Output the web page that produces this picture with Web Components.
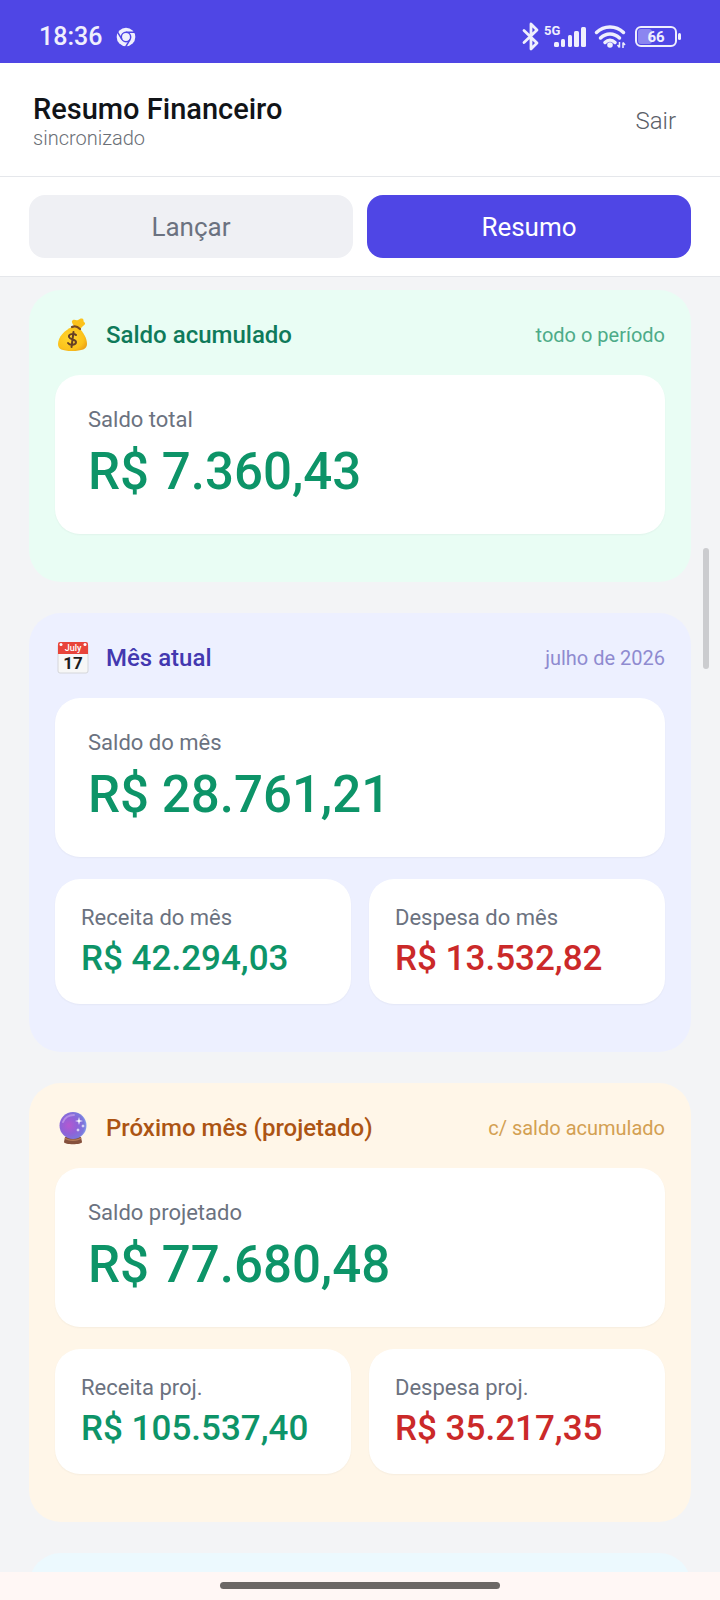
<!DOCTYPE html>
<html lang="pt-BR">
<head>
<meta charset="utf-8">
<meta name="viewport" content="width=device-width, initial-scale=1">
<title>Resumo Financeiro</title>
<style>
  html, body {
    margin: 0;
    height: 100%;
  }
  body {
    font-family: Roboto, "Liberation Sans", sans-serif;
    color: #111418;
    background: #f3f4f6;
  }
</style>
</head>
<body>
<finance-app>
  <status-bar slot="top" time="18:36" battery="66"></status-bar>
  <app-header slot="top" heading="Resumo Financeiro" status="sincronizado"></app-header>
  <view-tabs slot="top"></view-tabs>

  <summary-section tone="green" heading="Saldo acumulado" note="todo o período">
    <emoji-icon slot="icon" name="money"></emoji-icon>
    <amount-card size="large" label="Saldo total" value="R$ 7.360,43"></amount-card>
  </summary-section>

  <summary-section tone="indigo" heading="Mês atual" note="julho de 2026">
    <emoji-icon slot="icon" name="calendar"></emoji-icon>
    <amount-card size="large" label="Saldo do mês" value="R$ 28.761,21"></amount-card>
    <amount-card label="Receita do mês" value="R$ 42.294,03"></amount-card>
    <amount-card label="Despesa do mês" value="R$ 13.532,82" kind="expense"></amount-card>
  </summary-section>

  <summary-section tone="amber" heading="Próximo mês (projetado)" note="c/ saldo acumulado">
    <emoji-icon slot="icon" name="crystal"></emoji-icon>
    <amount-card size="large" label="Saldo projetado" value="R$ 77.680,48"></amount-card>
    <amount-card label="Receita proj." value="R$ 105.537,40"></amount-card>
    <amount-card label="Despesa proj." value="R$ 35.217,35" kind="expense"></amount-card>
  </summary-section>

  <summary-section tone="cyan"></summary-section>

  <gesture-bar slot="bottom"></gesture-bar>
</finance-app>

<script>
  function attach(el, html) {
    const root = el.attachShadow({ mode: 'open' });
    root.innerHTML = html;
    return root;
  }

  class FinanceApp extends HTMLElement {
    constructor() {
      super();
      attach(this, `
        <style>
          :host {
            display: flex;
            flex-direction: column;
            height: 100vh;
          }
          .view {
            position: relative;
            flex: 1;
            min-height: 0;
          }
          main {
            box-sizing: border-box;
            height: 100%;
            overflow-y: auto;
            scrollbar-width: none;
            padding: 13px 29px 0;
            display: flex;
            flex-direction: column;
            gap: 31px;
          }
          .thumb {
            position: absolute;
            right: 11px;
            top: 271px;
            width: 6px;
            height: 121px;
            border-radius: 3px;
            background: #cbcccf;
          }
        </style>
        <slot name="top"></slot>
        <div class="view">
          <main><slot></slot></main>
          <div class="thumb"></div>
        </div>
        <slot name="bottom"></slot>
      `);
    }
  }

  class StatusBar extends HTMLElement {
    connectedCallback() {
      attach(this, `
        <style>
          :host {
            box-sizing: border-box;
            display: flex;
            align-items: center;
            justify-content: space-between;
            height: 63px;
            padding: 10px 38px 0 39px;
            background: #4f46e5;
            color: #efeffd;
          }
          .group {
            display: flex;
            align-items: center;
          }
          .time {
            font-size: 25px;
            font-weight: 500;
            line-height: 28px;
          }
          svg { display: block; }
          .chrome { margin-left: 14px; }
          text {
            font-family: Roboto, "Liberation Sans", sans-serif;
            font-weight: 700;
          }
        </style>
        <div class="group">
          <span class="time">${this.getAttribute('time')}</span>
          <svg class="chrome" width="20" height="20" viewBox="0 0 20 20">
            <circle cx="10" cy="10" r="9.3" fill="#efeffd"/>
            <g fill="none" stroke="#4f46e5" stroke-width="1.5">
              <circle cx="10" cy="10" r="4.7"/>
              <path d="M10 5.3H19M5.900 12.400L1.400 4.800M14.100 12.400L9.600 20"/>
            </g>
          </svg>
        </div>
        <div class="group">
          <svg width="160" height="30" viewBox="0 0 160 30">
            <path d="M2 8.500l13 12.500-6 6V2l6 6L2 20.500" fill="none" stroke="#efeffd" stroke-width="2.800" stroke-linejoin="round" stroke-linecap="round"/>
            <text x="22" y="13" font-size="13" fill="#efeffd">5G</text>
            <g fill="#efeffd">
              <rect x="32" y="20" width="5" height="5" rx="1.500"/>
              <rect x="39" y="17" width="4" height="8" rx="1.500"/>
              <rect x="46" y="13" width="4" height="12" rx="1.500"/>
              <rect x="52" y="9" width="5" height="16" rx="1.500"/>
              <rect x="59" y="5" width="5" height="20" rx="1.500"/>
            </g>
            <g fill="none" stroke="#efeffd" stroke-width="3.500" stroke-linecap="round">
              <path d="M74.500 10.500C82 3 94 3 101.500 10.500"/>
              <path d="M78.500 16C84 10.500 92 10.500 97.500 16"/>
              <path d="M83 20.500C86 17.500 90 17.500 93 20.500"/>
            </g>
            <circle cx="88" cy="23" r="2.800" fill="#efeffd"/>
            <path d="M97.500 20v5.500M95.500 23l2 2.500M101 26v-5.500M103 23l-2-2.500" fill="none" stroke="#efeffd" stroke-width="1.500"/>
            <rect x="116" y="7" width="14" height="15" rx="3" fill="#8b85f0"/>
            <rect x="114" y="5" width="40" height="19" rx="5" fill="none" stroke="#efeffd" stroke-width="2"/>
            <rect x="156" y="11" width="3" height="7" rx="1.500" fill="#efeffd"/>
            <text x="134" y="20" font-size="15" text-anchor="middle" fill="#efeffd">${this.getAttribute('battery')}</text>
          </svg>
        </div>
      `);
    }
  }

  class AppHeader extends HTMLElement {
    connectedCallback() {
      attach(this, `
        <style>
          :host {
            display: flex;
            align-items: center;
            justify-content: space-between;
            padding: 29px 33px 26px;
            background: #fff;
            border-bottom: 1px solid #e5e7eb;
          }
          h1 {
            margin: 0;
            font-size: 29px;
            font-weight: 500;
            line-height: 34px;
          }
          p {
            margin: 0;
            font-size: 20px;
            font-weight: 300;
            line-height: 24px;
            color: #6b6f76;
          }
          button {
            border: 0;
            padding: 0 11px;
            background: none;
            font: 300 24px/30px Roboto, "Liberation Sans", sans-serif;
            color: #5b6068;
          }
        </style>
        <div>
          <h1>${this.getAttribute('heading')}</h1>
          <p>${this.getAttribute('status')}</p>
        </div>
        <button type="button">Sair</button>
      `);
    }
  }

  class ViewTabs extends HTMLElement {
    connectedCallback() {
      attach(this, `
        <style>
          :host {
            display: grid;
            grid-template-columns: 1fr 1fr;
            gap: 14px;
            padding: 18px 29px;
            background: #fff;
            border-bottom: 1px solid #e5e7eb;
          }
          button {
            height: 63px;
            border: 0;
            border-radius: 16px;
            padding: 0;
            background: #eff0f4;
            color: #6b7280;
            font: 400 26px/30px Roboto, "Liberation Sans", sans-serif;
          }
          button.active {
            background: #4f46e5;
            color: #fff;
          }
        </style>
        <button type="button">Lançar</button>
        <button type="button" class="active" aria-current="page">Resumo</button>
      `);
    }
  }

  class SummarySection extends HTMLElement {
    connectedCallback() {
      const heading = this.getAttribute('heading');
      attach(this, `
        <style>
          :host {
            --bg: #e9fdf4;
            --title: #0f7a5a;
            --note: #4dab88;
            flex: none;
            display: block;
            box-sizing: border-box;
            min-height: 120px;
            padding: 26px 26px 48px;
            border-radius: 32px;
            background: var(--bg);
          }
          :host([tone="indigo"]) { --bg: #edf0ff; --title: #4338b0; --note: #8f8bd0; }
          :host([tone="amber"]) { --bg: #fff6e8; --title: #ac5413; --note: #d3a052; }
          :host([tone="cyan"]) { --bg: #ecf9fe; }
          header {
            display: flex;
            align-items: center;
            height: 38px;
            padding-left: 1px;
            margin-bottom: 21px;
          }
          h2 {
            flex: 1;
            margin: 0 0 0 16px;
            font-size: 24px;
            font-weight: 500;
            line-height: 28px;
            color: var(--title);
          }
          .note {
            font-size: 20px;
            line-height: 24px;
            color: var(--note);
          }
          .cards {
            display: grid;
            grid-template-columns: 1fr 1fr;
            column-gap: 18px;
            row-gap: 22px;
          }
        </style>
        ${heading ? `
        <header>
          <slot name="icon"></slot>
          <h2>${heading}</h2>
          <span class="note">${this.getAttribute('note')}</span>
        </header>` : ''}
        <div class="cards"><slot></slot></div>
      `);
    }
  }

  class AmountCard extends HTMLElement {
    connectedCallback() {
      attach(this, `
        <style>
          :host {
            display: block;
            padding: 26px 26px 21px;
            border-radius: 25px;
            background: #fff;
            box-shadow: 0 1px 2px rgba(0, 0, 0, 0.04);
          }
          :host([size="large"]) {
            grid-column: 1 / -1;
            padding: 32px 33px 27px;
          }
          .label {
            margin-bottom: 4px;
            font-size: 22px;
            line-height: 26px;
            color: #6b7280;
          }
          .value {
            font-size: 35px;
            font-weight: 500;
            line-height: 48px;
            color: #0d9468;
          }
          :host([size="large"]) .value {
            font-size: 51px;
            line-height: 70px;
          }
          :host([kind="expense"]) .value { color: #cb2929; }
        </style>
        <div class="label">${this.getAttribute('label')}</div>
        <div class="value">${this.getAttribute('value')}</div>
      `);
    }
  }

  const EMOJI = {
    money: `
      <defs>
        <radialGradient id="bag" cx=".4" cy=".45" r=".65">
          <stop offset="0" stop-color="#ffd52e"/>
          <stop offset=".75" stop-color="#fcc21b"/>
          <stop offset="1" stop-color="#eda51a"/>
        </radialGradient>
      </defs>
      <path d="M18 8C16 5 15 3 17 2c2-1 3 1 5 0s3-2 5-1c1 1 0 2 1 3 2 1 1 3-1 4l-3 3z" fill="#fcc21b"/>
      <path d="M16 9C9 12 2 19 2 26c0 5 4 7 14 7s15-2 15-7c0-6-4-12-8-16z" fill="url(#bag)"/>
      <path d="M16 9c2-1 5-1 8 2" fill="none" stroke="#7a4a1e" stroke-width="2.200" stroke-linecap="round"/>
      <path d="M20 17c-2-2-8-1-7 2s7 2 7 5-6 4-8 1M17.500 14l-2 15" fill="none" stroke="#674025" stroke-width="2" stroke-linecap="round"/>`,
    calendar: `
      <rect x="2" y="3" width="30" height="29" rx="2" fill="#f7f7f7" stroke="#d5d6da"/>
      <path d="M2 3a2 2 0 0 1 2-2h26a2 2 0 0 1 2 2v10H2z" fill="#e8443a"/>
      <circle cx="5" cy="3.500" r="1.500" fill="#fff"/>
      <circle cx="29" cy="3.500" r="1.500" fill="#fff"/>
      <text x="17" y="10" font-size="9" font-weight="500" text-anchor="middle" fill="#fff">July</text>
      <text x="17" y="28" font-size="17" font-weight="700" text-anchor="middle" fill="#1c1c1c">17</text>`,
    crystal: `
      <defs>
        <radialGradient id="ball" cx=".35" cy=".5" r=".7">
          <stop offset="0" stop-color="#b558d0"/>
          <stop offset=".45" stop-color="#8f62d8"/>
          <stop offset=".8" stop-color="#7b78dc"/>
          <stop offset="1" stop-color="#8fb4f4"/>
        </radialGradient>
      </defs>
      <path d="M9 26h16l1 5c0 3-18 3-18 0z" fill="#85503c"/>
      <path d="M9 27c3 3 13 3 16 0" fill="none" stroke="#b57a58" stroke-width="1.500"/>
      <circle cx="17" cy="14.500" r="13.500" fill="url(#ball)"/>
      <path d="M7 11C9 6 13 4 18 4" fill="none" stroke="#d9b6f5" stroke-width="2" stroke-linecap="round" opacity=".5"/>
      <path d="M23 6l.8 3.200 3.200.8-3.200.8-.8 3.200-.8-3.200-3.200-.8 3.200-.8zM27 13l.5 1.500 1.500.5-1.500.5-.5 1.500-.5-1.500-1.500-.5 1.500-.5zM22 17l.5 1.500 1.500.5-1.500.5-.5 1.500-.5-1.500-1.500-.5 1.500-.5z" fill="#fff"/>`
  };

  class EmojiIcon extends HTMLElement {
    connectedCallback() {
      attach(this, `
        <style>
          :host {
            flex: none;
            display: block;
          }
          svg { display: block; }
          text { font-family: Roboto, "Liberation Sans", sans-serif; }
        </style>
        <svg width="34" height="34" viewBox="0 0 34 34" aria-hidden="true">${EMOJI[this.getAttribute('name')]}</svg>
      `);
    }
  }

  class GestureBar extends HTMLElement {
    constructor() {
      super();
      attach(this, `
        <style>
          :host {
            flex: none;
            display: flex;
            justify-content: center;
            padding: 10px 0 11px;
            background: #fff7f5;
          }
          div {
            width: 39%;
            height: 7px;
            border-radius: 4px;
            background: #6b6765;
          }
        </style>
        <div></div>
      `);
    }
  }

  customElements.define('finance-app', FinanceApp);
  customElements.define('status-bar', StatusBar);
  customElements.define('app-header', AppHeader);
  customElements.define('view-tabs', ViewTabs);
  customElements.define('summary-section', SummarySection);
  customElements.define('amount-card', AmountCard);
  customElements.define('emoji-icon', EmojiIcon);
  customElements.define('gesture-bar', GestureBar);
</script>
</body>
</html>
